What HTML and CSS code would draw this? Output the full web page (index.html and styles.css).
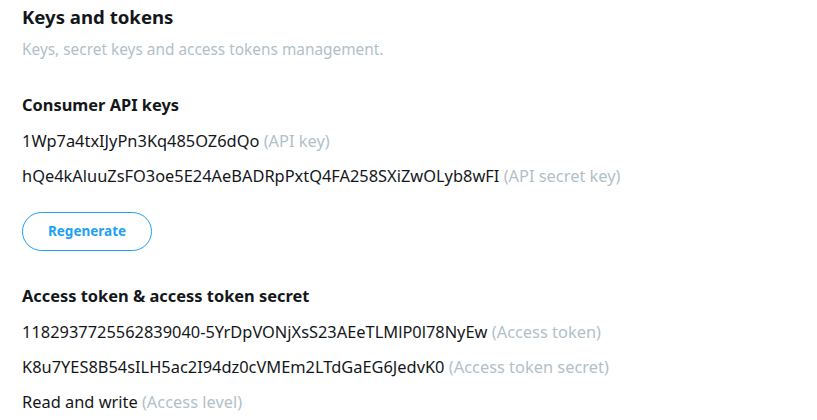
FILE: index.html
```html
<!DOCTYPE html>
<html>
<head>
<meta charset="utf-8">
<link rel="stylesheet" href="styles.css">
</head>
<body>
<main class="page">
  <header class="intro">
    <h1 class="title">Keys and tokens</h1>
    <p class="subtitle">Keys, secret keys and access tokens management.</p>
  </header>
  <section class="group">
    <h2 class="group-title">Consumer API keys</h2>
    <p class="row">1Wp7a4txIJyPn3Kq485OZ6dQo <span class="hint">(API key)</span></p>
    <p class="row">hQe4kAluuZsFO3oe5E24AeBADRpPxtQ4FA258SXiZwOLyb8wFI <span class="hint">(API secret key)</span></p>
    <div class="actions"><button class="btn">Regenerate</button></div>
  </section>
  <section class="group">
    <h2 class="group-title">Access token &amp; access token secret</h2>
    <p class="row">1182937725562839040-5YrDpVONjXsS23AEeTLMlP0l78NyEw <span class="hint">(Access token)</span></p>
    <p class="row">K8u7YES8B54sILH5ac2I94dz0cVMEm2LTdGaEG6JedvK0 <span class="hint">(Access token secret)</span></p>
    <p class="row">Read and write <span class="hint">(Access level)</span></p>
  </section>
</main>
</body>
</html>
```
FILE: styles.css
```css
html, body { margin: 0; padding: 0; background: #fff; }
body { font-family: "Noto Sans", "Open Sans", sans-serif; color: #14171a; }
.page { padding: 0 22px; }
.title { margin: 0; font-size: 18.6px; font-weight: 700; line-height: 34px; }
.subtitle { margin: 0; font-size: 15.4px; color: #b2bfc8; line-height: 32px; }
.group { margin-top: 27px; }
.group-title { margin: 0 0 6px; font-size: 16.4px; font-weight: 700; line-height: 24px; }
.row { margin: 0; font-size: 16.4px; line-height: 35.3px; }
.hint { color: #b2bfc8; }
.actions { padding: 18px 0 6px; }
.btn { font: inherit; font-size: 13.5px; font-weight: 700; color: #1da1f2; background: #fff; border: 1px solid #1da1f2; border-radius: 20px; width: 130px; height: 39px; padding: 0; }
```
